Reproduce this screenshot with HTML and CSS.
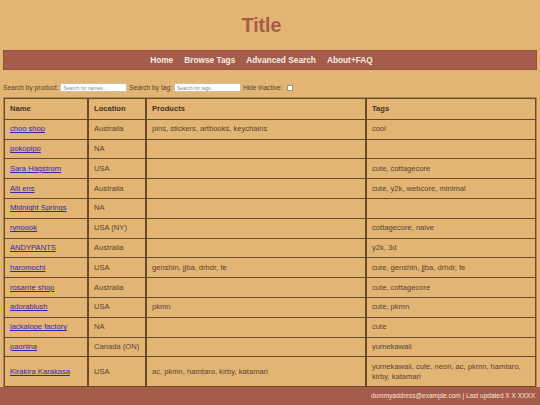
FILE: index.html
```html
<!DOCTYPE html>
<html lang="en">
<head>
    <meta charset="UTF-8">
    <meta name="viewport" content="width=device-width, initial-scale=1.0">
    <title>Title</title>
    <link rel="stylesheet" href="styles.css">
</head>
<body>
    <div class="page">
        <h1 class="title">Title</h1>

        <nav class="nav">
            <a href="#">Home</a>
            <a href="#">Browse Tags</a>
            <a href="#">Advanced Search</a>
            <a href="#">About+FAQ</a>
        </nav>

        <div class="filters">
            <label for="product">Search by product:</label>
            <input type="text" id="product" placeholder="Search for names..">
            <label for="tag">Search by tag:</label>
            <input type="text" id="tag" placeholder="Search for tags..">
            <label for="inactive">Hide inactive:</label>
            <input type="checkbox" id="inactive">
        </div>

        <table class="shops">
            <thead>
                <tr>
                    <th class="col-name">Name</th>
                    <th class="col-loc">Location</th>
                    <th class="col-prod">Products</th>
                    <th>Tags</th>
                </tr>
            </thead>
            <tbody>
                <tr><td><a href="#">choo shop</a></td><td>Australia</td><td>pins, stickers, artbooks, keychains</td><td>cool</td></tr>
                <tr><td><a href="#">pokopipo</a></td><td>NA</td><td></td><td></td></tr>
                <tr><td><a href="#">Sara Hagstrom</a></td><td>USA</td><td></td><td>cute, cottagecore</td></tr>
                <tr><td><a href="#">Alli ens</a></td><td>Australia</td><td></td><td>cute, y2k, webcore, minimal</td></tr>
                <tr><td><a href="#">Midnight Springs</a></td><td>NA</td><td></td><td></td></tr>
                <tr><td><a href="#">rynoook</a></td><td>USA (NY)</td><td></td><td>cottagecore, naive</td></tr>
                <tr><td><a href="#">ANDYPANTS</a></td><td>Australia</td><td></td><td>y2k, 3d</td></tr>
                <tr><td><a href="#">haromochi</a></td><td>USA</td><td>genshin, jjba, drhdr, fe</td><td>cute, genshin, jjba, drhdr, fe</td></tr>
                <tr><td><a href="#">rosarrie shop</a></td><td>Australia</td><td></td><td>cute, cottagecore</td></tr>
                <tr><td><a href="#">adorablush</a></td><td>USA</td><td>pkmn</td><td>cute, pkmn</td></tr>
                <tr><td><a href="#">jackalope factory</a></td><td>NA</td><td></td><td>cute</td></tr>
                <tr><td><a href="#">paoriina</a></td><td>Canada (ON)</td><td></td><td>yumekawaii</td></tr>
                <tr><td><a href="#">Kirakira Karakasa</a></td><td>USA</td><td>ac, pkmn, hamtaro, kirby, katamari</td><td>yumekawaii, cute, neon, ac, pkmn, hamtaro, kirby, katamari</td></tr>
            </tbody>
        </table>
    </div>

    <footer class="footer">dummyaddress@example.com | Last updated X X XXXX</footer>
</body>
</html>
```

FILE: styles.css
```css
* {
    box-sizing: border-box;
}

body {
    margin: 0;
    background: #e2b574;
    font-family: "Liberation Sans", Arial, sans-serif;
    color: #56442f;
}

.page {
    padding: 0 3px;
}

.title {
    margin: 0;
    padding: 13px 17px 13px 0;
    line-height: 24px;
    font-size: 19.5px;
    text-align: center;
    color: #a65c4a;
}

.nav {
    display: flex;
    justify-content: center;
    align-items: center;
    gap: 11px;
    height: 20px;
    padding-right: 17px;
    background: #a65c4a;
    border: 1px solid #98503f;
}

.nav a {
    color: #f8ece0;
    font-size: 8.3px;
    font-weight: bold;
    text-decoration: none;
}

.filters {
    display: flex;
    align-items: center;
    height: 11px;
    margin: 12px 0 4px;
    font-size: 6.6px;
}

.filters label {
    margin-right: 2px;
}

.filters input[type="text"] {
    width: 67px;
    height: 9px;
    margin: 0 2px 0 0;
    padding: 0 2px;
    border: 1px solid #c9c0b4;
    background: #fff;
    font-family: "Liberation Sans", Arial, sans-serif;
    font-size: 5px;
}

.filters input::placeholder {
    color: #8a8a8a;
}

.filters input[type="checkbox"] {
    appearance: none;
    width: 6px;
    height: 6px;
    margin: 0 0 0 3px;
    border: 1px solid #8f8f8f;
    border-radius: 1px;
    background: #fff;
}

.shops {
    width: 100%;
    border: 1px solid #a9874f;
    border-spacing: 0;
    font-size: 7.6px;
}

.shops th,
.shops td {
    padding: 4.5px 5px;
    line-height: 9.8px;
    text-align: left;
    vertical-align: middle;
    border-left: 1px solid #6b4a2a;
    border-right: 1px solid #6b4a2a;
    border-bottom: 1px solid #6b4a2a;
}

.shops thead th {
    border-top: 1px solid #6b4a2a;
    color: #45331f;
    padding-top: 5px;
    padding-bottom: 5px;
}

.shops a {
    color: #3325b0;
}

.col-name {
    width: 84px;
}

.col-loc {
    width: 58px;
}

.col-prod {
    width: 220px;
}

.footer {
    position: fixed;
    left: 0;
    right: 0;
    bottom: 0;
    height: 18px;
    padding-right: 5px;
    background: #a65c4a;
    color: #f5e6d8;
    font-size: 6.5px;
    line-height: 18px;
    text-align: right;
}
```
